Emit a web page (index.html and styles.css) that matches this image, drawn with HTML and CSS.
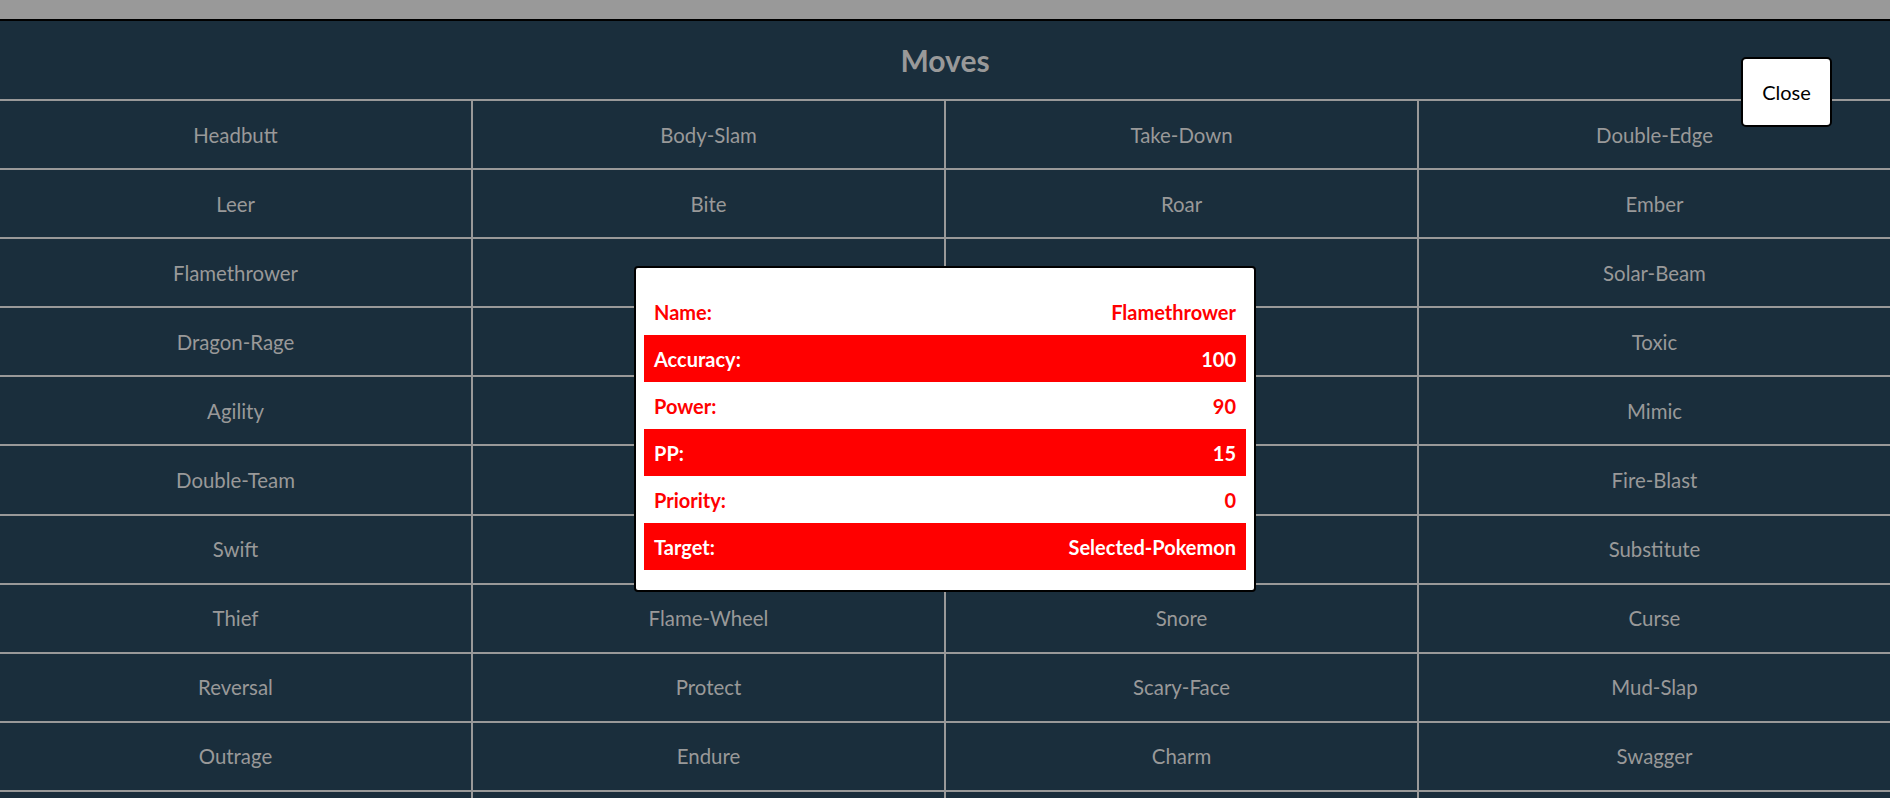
FILE: index.html
```html
<!DOCTYPE html>
<html lang="en">
<head>
<meta charset="utf-8">
<title>Moves</title>
<link rel="stylesheet" href="styles.css">
</head>
<body>
<div class="page">
  <section class="moves">
    <h2 class="moves-title">Moves</h2>
    <div class="moves-grid">
      <div class="move">Headbutt</div><div class="move">Body-Slam</div><div class="move">Take-Down</div><div class="move">Double-Edge</div>
      <div class="move">Leer</div><div class="move">Bite</div><div class="move">Roar</div><div class="move">Ember</div>
      <div class="move">Flamethrower</div><div class="move"></div><div class="move"></div><div class="move">Solar-Beam</div>
      <div class="move">Dragon-Rage</div><div class="move"></div><div class="move"></div><div class="move">Toxic</div>
      <div class="move">Agility</div><div class="move"></div><div class="move"></div><div class="move">Mimic</div>
      <div class="move">Double-Team</div><div class="move"></div><div class="move"></div><div class="move">Fire-Blast</div>
      <div class="move">Swift</div><div class="move"></div><div class="move"></div><div class="move">Substitute</div>
      <div class="move">Thief</div><div class="move">Flame-Wheel</div><div class="move">Snore</div><div class="move">Curse</div>
      <div class="move">Reversal</div><div class="move">Protect</div><div class="move">Scary-Face</div><div class="move">Mud-Slap</div>
      <div class="move">Outrage</div><div class="move">Endure</div><div class="move">Charm</div><div class="move">Swagger</div>
      <div class="move"></div><div class="move"></div><div class="move"></div><div class="move"></div>
    </div>
  </section>

  <button class="close-btn" type="button">Close</button>

  <div class="move-card">
    <div class="card-row"><span>Name:</span><span>Flamethrower</span></div>
    <div class="card-row card-row--band"><span>Accuracy:</span><span>100</span></div>
    <div class="card-row"><span>Power:</span><span>90</span></div>
    <div class="card-row card-row--band"><span>PP:</span><span>15</span></div>
    <div class="card-row"><span>Priority:</span><span>0</span></div>
    <div class="card-row card-row--band"><span>Target:</span><span>Selected-Pokemon</span></div>
  </div>
</div>
</body>
</html>
```

FILE: styles.css
```css
html, body {
  margin: 0;
  padding: 0;
}

body {
  background: #999999;
  font-family: Lato, "Open Sans", "Liberation Sans", sans-serif;
  overflow: hidden;
}

.page {
  position: relative;
  padding-top: 19px;
}

.moves {
  border-top: 2px solid #000;
  background: #1a2e3c;
}

.moves-title {
  margin: 0;
  height: 78px;
  display: flex;
  align-items: center;
  justify-content: center;
  font-size: 30px;
  font-weight: 700;
  color: #999999;
  border-bottom: 2px solid #999999;
}

.moves-grid {
  display: grid;
  grid-template-columns: repeat(4, 1fr);
  gap: 2px;
  background: #999999;
}

.move {
  height: 67.1px;
  background: #1a2e3c;
  color: #999999;
  font-size: 20.4px;
  display: flex;
  align-items: center;
  justify-content: center;
}

.close-btn {
  position: absolute;
  top: 57px;
  right: 58px;
  width: 91px;
  height: 70px;
  background: #fff;
  border: 2px solid #000;
  border-radius: 5px;
  font-family: inherit;
  font-size: 20px;
  color: #000;
  padding: 0;
}

.move-card {
  position: absolute;
  top: 266px;
  left: 634px;
  width: 622px;
  box-sizing: border-box;
  background: #fff;
  border: 2px solid #000;
  border-radius: 4px;
  padding: 20px 8px 20px;
}

.card-row {
  height: 47px;
  display: flex;
  align-items: center;
  justify-content: space-between;
  padding: 0 10px;
  font-size: 20px;
  font-weight: 700;
  color: #ff0000;
}

.card-row--band {
  background: #ff0000;
  color: #fff;
}
```
